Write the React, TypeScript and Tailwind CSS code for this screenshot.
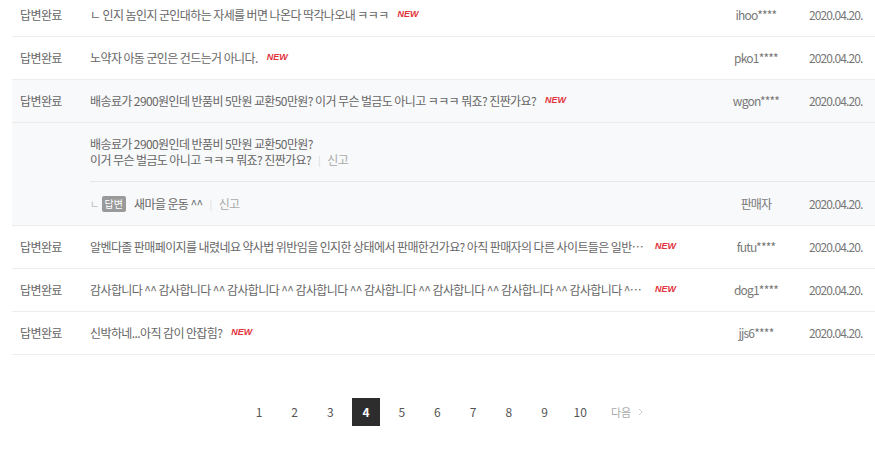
import React from "react";

const FONT = { fontFamily: '"Noto Sans CJK KR", "Noto Sans", sans-serif' };

type Row = { title: string; author: string; isNew: boolean; truncate?: boolean; gray?: boolean };

const rowsTop: Row[] = [
  { title: "ㄴ 인지 놈인지 군인대하는 자세를 버면 나온다 딱각나오내 ㅋㅋㅋ", author: "ihoo****", isNew: true },
  { title: "노약자 아동 군인은 건드는거 아니다.", author: "pko1****", isNew: true },
  {
    title: "배송료가 2900원인데 반품비 5만원 교환50만원? 이거 무슨 벌금도 아니고 ㅋㅋㅋ 뭐죠? 진짠가요?",
    author: "wgon****",
    isNew: true,
    gray: true,
  },
];

const rowsBottom: Row[] = [
  {
    title:
      "알벤다졸 판매페이지를 내렸네요 약사법 위반임을 인지한 상태에서 판매한건가요? 아직 판매자의 다른 사이트들은 일반의약품으로 판매중이던데요",
    author: "futu****",
    isNew: true,
    truncate: true,
  },
  {
    title:
      "감사합니다 ^^ 감사합니다 ^^ 감사합니다 ^^ 감사합니다 ^^ 감사합니다 ^^ 감사합니다 ^^ 감사합니다 ^^ 감사합니다 ^^ 감사합니다 ^^",
    author: "dog1****",
    isNew: true,
    truncate: true,
  },
  { title: "신박하네...아직 감이 안잡힘?", author: "jjs6****", isNew: true },
];

function NewBadge() {
  return (
    <span
      className="ml-[9px] shrink-0 text-[9px] font-bold italic tracking-normal text-[#e2343d]"
      style={{ fontFamily: '"Liberation Sans", Arial, sans-serif' }}
    >
      NEW
    </span>
  );
}

function Author({ name }: { name: string }) {
  return <div className="w-[90px] shrink-0 text-center tracking-[-0.8px] text-[#777]">{name}</div>;
}

function DateCell() {
  return <div className="w-[74px] shrink-0 pl-[8px] tracking-[-0.9px] text-[#777]">2020.04.20.</div>;
}

function ListRow({ r }: { r: Row }) {
  return (
    <div
      className={`flex h-[43px] items-center border-b border-[#ececec] ${r.gray ? "bg-[#f8f9fa]" : "bg-white"}`}
    >
      <div className="w-[78px] shrink-0 pl-[8px] text-[#666]">답변완료</div>
      <div className="flex min-w-0 flex-1 items-center">
        <span
          className={`text-[#666] ${r.truncate ? "block w-[556px] overflow-hidden text-ellipsis whitespace-nowrap" : "whitespace-nowrap"}`}
        >
          {r.title}
        </span>
        {r.isNew && <NewBadge />}
      </div>
      <Author name={r.author} />
      <DateCell />
    </div>
  );
}

export default function App() {
  const pages = [1, 2, 3, 4, 5, 6, 7, 8, 9, 10];
  return (
    <div className="h-[450px] w-[875px] overflow-hidden bg-white" style={FONT}>
      <div className="-mt-[6px] pl-[12px] text-[12px] tracking-[-0.6px]">
        {rowsTop.map((r, i) => (
          <ListRow key={i} r={r} />
        ))}

        <div className="flex border-b border-[#ececec] bg-[#f8f9fa]">
          <div className="w-[78px] shrink-0" />
          <div className="flex min-w-0 flex-1 flex-col">
            <div className="pb-[13px] pt-[13px] leading-[16px] text-[#666]">
              <div>배송료가 2900원인데 반품비 5만원 교환50만원?</div>
              <div className="flex items-center">
                <span>이거 무슨 벌금도 아니고 ㅋㅋㅋ 뭐죠? 진짠가요?</span>
                <span className="mx-[7px] text-[10px] text-[#d8d8d8]">|</span>
                <span className="text-[#aaa]">신고</span>
              </div>
            </div>
            <div className="border-t border-[#e8e8e8]" />
            <div className="flex h-[43px] items-center">
              <div className="flex min-w-0 flex-1 items-center">
                <span className="text-[10px] text-[#bbb]">ㄴ</span>
                <span className="ml-[3px] flex h-[16px] items-center rounded-[2px] bg-[#9a9a9a] px-[3px] text-[10px] tracking-normal text-white">
                  답변
                </span>
                <span className="ml-[8px] text-[#666]">새마을 운동 ^^</span>
                <span className="mx-[7px] text-[10px] text-[#d8d8d8]">|</span>
                <span className="text-[#aaa]">신고</span>
              </div>
              <Author name="판매자" />
              <DateCell />
            </div>
          </div>
        </div>

        {rowsBottom.map((r, i) => (
          <ListRow key={i} r={r} />
        ))}
      </div>

      <div className="mt-[43px] flex items-center gap-[7.7px] pl-[245px] text-[12px]">
        {pages.map((p) => (
          <div
            key={p}
            className={`flex h-[28px] w-[28px] items-center justify-center ${
              p === 4 ? "bg-[#2d2d2d] font-bold text-white" : "text-[#555]"
            }`}
          >
            {p}
          </div>
        ))}
        <div className="ml-[9px] flex items-center text-[#aaa]">
          <span className="text-[11px]">다음</span>
          <svg className="ml-[7px]" width="5" height="8" viewBox="0 0 5 8" fill="none">
            <path d="M1 1l3 3-3 3" stroke="#cfcfcf" strokeWidth="1" />
          </svg>
        </div>
      </div>
    </div>
  );
}
